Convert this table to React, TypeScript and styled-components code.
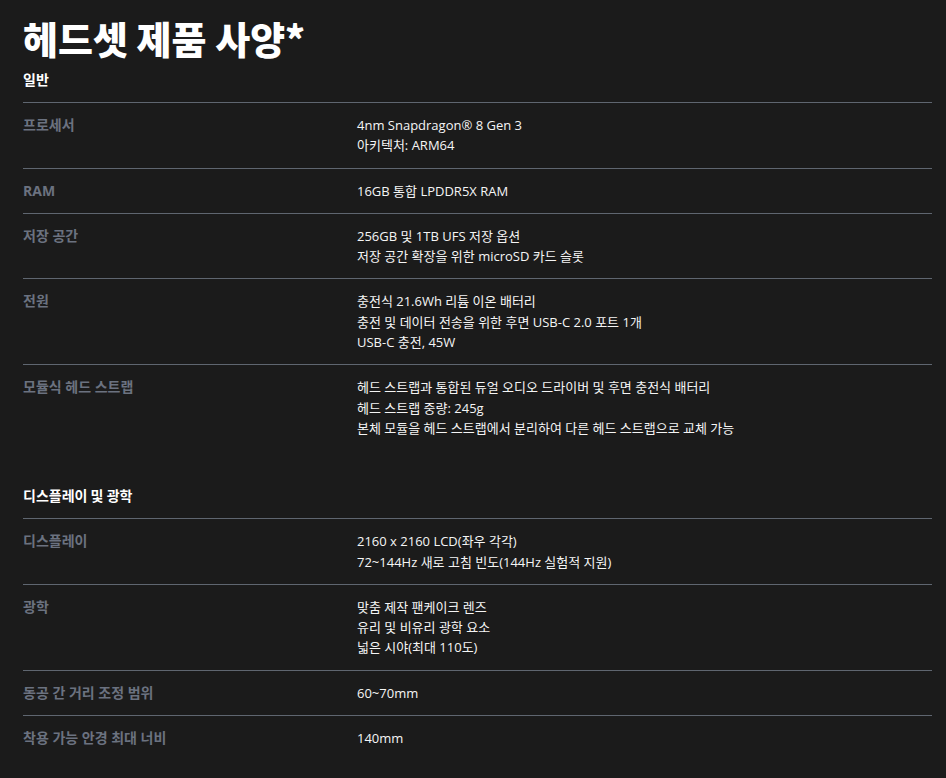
import styled, { createGlobalStyle } from "styled-components";

const GlobalStyle = createGlobalStyle`
  html, body {
    margin: 0;
    padding: 0;
    background-color: #1b1b1b;
  }
  body {
    font-family: "Open Sans", "Noto Sans CJK KR", sans-serif;
  }
`;

const Page = styled.div`
  padding: 14px 14px 24px 23px;
  color: #ffffff;
`;

const Title = styled.h1`
  margin: 0 0 7px;
  font-family: "Noto Sans CJK KR", sans-serif;
  font-size: 38px;
  font-weight: 900;
  line-height: 48px;
`;

const Section = styled.section<{ spaced?: boolean }>`
  margin-top: ${(props) => (props.spaced ? "35px" : "0")};
`;

const SectionTitle = styled.h2`
  margin: 0;
  padding-bottom: 13px;
  font-family: "Noto Sans CJK KR", sans-serif;
  font-size: 14px;
  font-weight: 700;
  line-height: 20px;
  border-bottom: 1px solid #5f6670;
`;

const Row = styled.div<{ last?: boolean }>`
  display: grid;
  grid-template-columns: 334px 1fr;
  padding: 12px 0;
  border-bottom: ${(props) => (props.last ? "none" : "1px solid #5f6670")};
  font-size: 13px;
  line-height: 20.3px;
`;

const Label = styled.div`
  color: #6b7280;
  font-size: 14px;
  font-weight: 700;
`;

const Values = styled.div`
  color: #f5f5f5;
`;

const Line = styled.div``;

interface ISpec {
  label: string;
  values: string[];
}

const general: ISpec[] = [
  { label: "프로세서", values: ["4nm Snapdragon® 8 Gen 3", "아키텍처: ARM64"] },
  { label: "RAM", values: ["16GB 통합 LPDDR5X RAM"] },
  {
    label: "저장 공간",
    values: ["256GB 및 1TB UFS 저장 옵션", "저장 공간 확장을 위한 microSD 카드 슬롯"],
  },
  {
    label: "전원",
    values: [
      "충전식 21.6Wh 리튬 이온 배터리",
      "충전 및 데이터 전송을 위한 후면 USB-C 2.0 포트 1개",
      "USB-C 충전, 45W",
    ],
  },
  {
    label: "모듈식 헤드 스트랩",
    values: [
      "헤드 스트랩과 통합된 듀얼 오디오 드라이버 및 후면 충전식 배터리",
      "헤드 스트랩 중량: 245g",
      "본체 모듈을 헤드 스트랩에서 분리하여 다른 헤드 스트랩으로 교체 가능",
    ],
  },
];

const display: ISpec[] = [
  {
    label: "디스플레이",
    values: ["2160 x 2160 LCD(좌우 각각)", "72~144Hz 새로 고침 빈도(144Hz 실험적 지원)"],
  },
  {
    label: "광학",
    values: ["맞춤 제작 팬케이크 렌즈", "유리 및 비유리 광학 요소", "넓은 시야(최대 110도)"],
  },
  { label: "동공 간 거리 조정 범위", values: ["60~70mm"] },
  { label: "착용 가능 안경 최대 너비", values: ["140mm"] },
];

function SpecList({ specs }: { specs: ISpec[] }) {
  return (
    <>
      {specs.map((spec, index) => (
        <Row key={spec.label} last={index === specs.length - 1}>
          <Label>{spec.label}</Label>
          <Values>
            {spec.values.map((value) => (
              <Line key={value}>{value}</Line>
            ))}
          </Values>
        </Row>
      ))}
    </>
  );
}

function App() {
  return (
    <>
      <GlobalStyle />
      <Page>
        <Title>헤드셋 제품 사양*</Title>
        <Section>
          <SectionTitle>일반</SectionTitle>
          <SpecList specs={general} />
        </Section>
        <Section spaced>
          <SectionTitle>디스플레이 및 광학</SectionTitle>
          <SpecList specs={display} />
        </Section>
      </Page>
    </>
  );
}

export default App;
